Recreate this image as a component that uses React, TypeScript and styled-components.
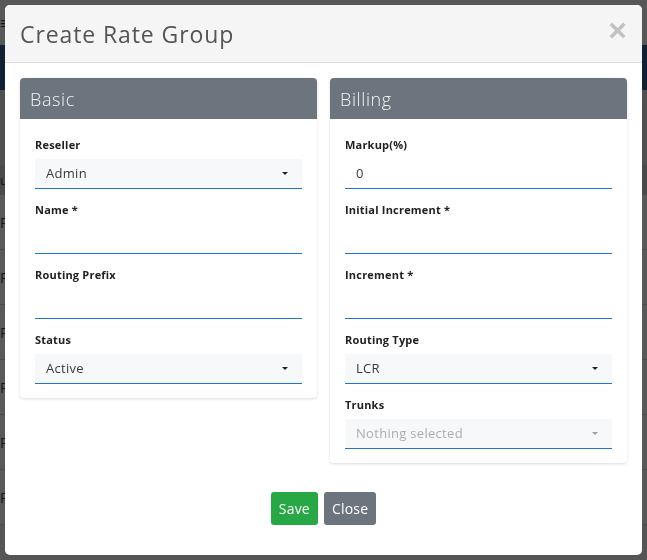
import React from "react";
import styled, { createGlobalStyle } from "styled-components";

const Global = createGlobalStyle`
  html, body { margin: 0; padding: 0; }
  body { font-family: "Open Sans", "Liberation Sans", sans-serif; background: #f1f1f1; overflow: hidden; }
  * { box-sizing: border-box; }
`;

const Page = styled.div`
  width: 647px;
  height: 560px;
  display: flex;
  flex-direction: column;
  background: #f4f4f4;
`;

const TopBar = styled.div`
  height: 45px;
  display: flex;
  align-items: center;
  font-size: 16px;
  color: #333;
  background: #fafafa;
`;

const NavBand = styled.div`
  height: 45px;
  background: #2d5f8f;
`;

const SubBar = styled.div`
  height: 75px;
  background: #e6e6e6;
`;

const TableHead = styled.div`
  height: 30px;
  background: #d4d4d4;
  font-size: 13px;
  display: flex;
  align-items: center;
  color: #333;
`;

const TableRow = styled.div`
  height: 55px;
  border-bottom: 1px solid #d8d8d8;
  display: flex;
  align-items: center;
  color: #444;
  font-size: 14px;
  background: #fff;
`;

const Backdrop = styled.div`
  position: fixed;
  inset: 0;
  background: rgba(0, 0, 0, 0.65);
  display: flex;
  align-items: flex-start;
  justify-content: flex-start;
  padding: 5px;
`;

const Modal = styled.div`
  width: 637px;
  height: 550px;
  background: #fff;
  border-radius: 5px;
  display: flex;
  flex-direction: column;
  overflow: hidden;
`;

const ModalHeader = styled.div`
  height: 58px;
  background: #f5f5f5;
  border-bottom: 1px solid #dcdcdc;
  display: flex;
  align-items: center;
  justify-content: space-between;
  padding: 0 15px;
`;

const Title = styled.h4`
  margin: 0;
  font-family: "Open Sans", sans-serif;
  font-weight: 400;
  font-size: 23px;
  letter-spacing: 0.9px;
  color: #555;
`;

const CloseX = styled.span`
  font-family: "Liberation Sans", sans-serif;
  font-size: 32px;
  font-weight: 700;
  line-height: 1;
  color: #c2c2c2;
  margin-top: -8px;
`;

const ModalBody = styled.div`
  flex: 1;
  display: flex;
  flex-direction: column;
  padding: 15px 15px 0 15px;
`;

const Columns = styled.div`
  display: grid;
  grid-template-columns: 297px 297px;
  column-gap: 13px;
  align-items: start;
`;

const Panel = styled.div`
  background: #fff;
  border-radius: 4px;
  box-shadow: 0 1px 3px rgba(0, 0, 0, 0.14);
`;

const PanelHeader = styled.div`
  height: 41px;
  background: #6c757d;
  border-radius: 4px 4px 0 0;
  display: flex;
  align-items: center;
  padding-left: 10px;
  color: #f1f3f5;
  font-weight: 300;
  font-size: 18px;
  letter-spacing: 0.6px;
`;

const PanelBody = styled.div`
  padding: 18px 15px 14px 15px;
  display: flex;
  flex-direction: column;
  gap: 13px;
`;

const Field = styled.div`
  display: flex;
  flex-direction: column;
`;

const Label = styled.label`
  font-size: 11px;
  font-weight: 700;
  line-height: 16px;
  margin-bottom: 6px;
  color: #222;
  letter-spacing: 0.2px;
`;

const Input = styled.div<{ $filled?: boolean }>`
  height: 30px;
  border-bottom: 1px solid #1f75d4;
  background: ${(p) => (p.$filled ? "#f7f8fa" : "#fff")};
  display: flex;
  align-items: center;
  justify-content: space-between;
  padding: 0 11px 1px 11px;
  font-size: 13px;
  color: #333;
`;

const Value = styled.span<{ $muted?: boolean }>`
  color: ${(p) => (p.$muted ? "#a9adb2" : "#3a3a3a")};
  letter-spacing: 0.3px;
`;

const Caret = styled.span<{ $muted?: boolean }>`
  width: 0;
  height: 0;
  border-left: 3px solid transparent;
  border-right: 3px solid transparent;
  border-top: 3px solid ${(p) => (p.$muted ? "#a0a0a0" : "#222")};
  margin-right: 3px;
`;

const Footer = styled.div`
  display: flex;
  justify-content: center;
  gap: 6px;
  margin-top: 29px;
`;

const Button = styled.button<{ $variant: "save" | "close" }>`
  height: 33px;
  padding: 0 8px;
  border: none;
  border-radius: 3px;
  font-family: "Open Sans", sans-serif;
  font-size: 14px;
  letter-spacing: 0.2px;
  color: #fff;
  background: ${(p) => (p.$variant === "save" ? "#28a745" : "#6c757d")};
`;

type FieldDef = { label: string; value?: string; select?: boolean; muted?: boolean };

const basic: FieldDef[] = [
  { label: "Reseller", value: "Admin", select: true },
  { label: "Name *" },
  { label: "Routing Prefix" },
  { label: "Status", value: "Active", select: true },
];

const billing: FieldDef[] = [
  { label: "Markup(%)", value: "0" },
  { label: "Initial Increment *" },
  { label: "Increment *" },
  { label: "Routing Type", value: "LCR", select: true },
  { label: "Trunks", value: "Nothing selected", select: true, muted: true },
];

function FormPanel({ title, fields }: { title: string; fields: FieldDef[] }) {
  return (
    <Panel>
      <PanelHeader>{title}</PanelHeader>
      <PanelBody>
        {fields.map((f) => (
          <Field key={f.label}>
            <Label>{f.label}</Label>
            <Input $filled={f.select}>
              <Value $muted={f.muted}>{f.value ?? ""}</Value>
              {f.select && <Caret $muted={f.muted} />}
            </Input>
          </Field>
        ))}
      </PanelBody>
    </Panel>
  );
}

export default function App() {
  return (
    <>
      <Global />
      <Page>
        <TopBar>≡</TopBar>
        <NavBand />
        <SubBar />
        <TableHead>ug</TableHead>
        {Array.from({ length: 6 }).map((_, i) => (
          <TableRow key={i}>R</TableRow>
        ))}
      </Page>
      <Backdrop>
        <Modal>
          <ModalHeader>
            <Title>Create Rate Group</Title>
            <CloseX>×</CloseX>
          </ModalHeader>
          <ModalBody>
            <Columns>
              <FormPanel title="Basic" fields={basic} />
              <FormPanel title="Billing" fields={billing} />
            </Columns>
            <Footer>
              <Button $variant="save">Save</Button>
              <Button $variant="close">Close</Button>
            </Footer>
          </ModalBody>
        </Modal>
      </Backdrop>
    </>
  );
}
